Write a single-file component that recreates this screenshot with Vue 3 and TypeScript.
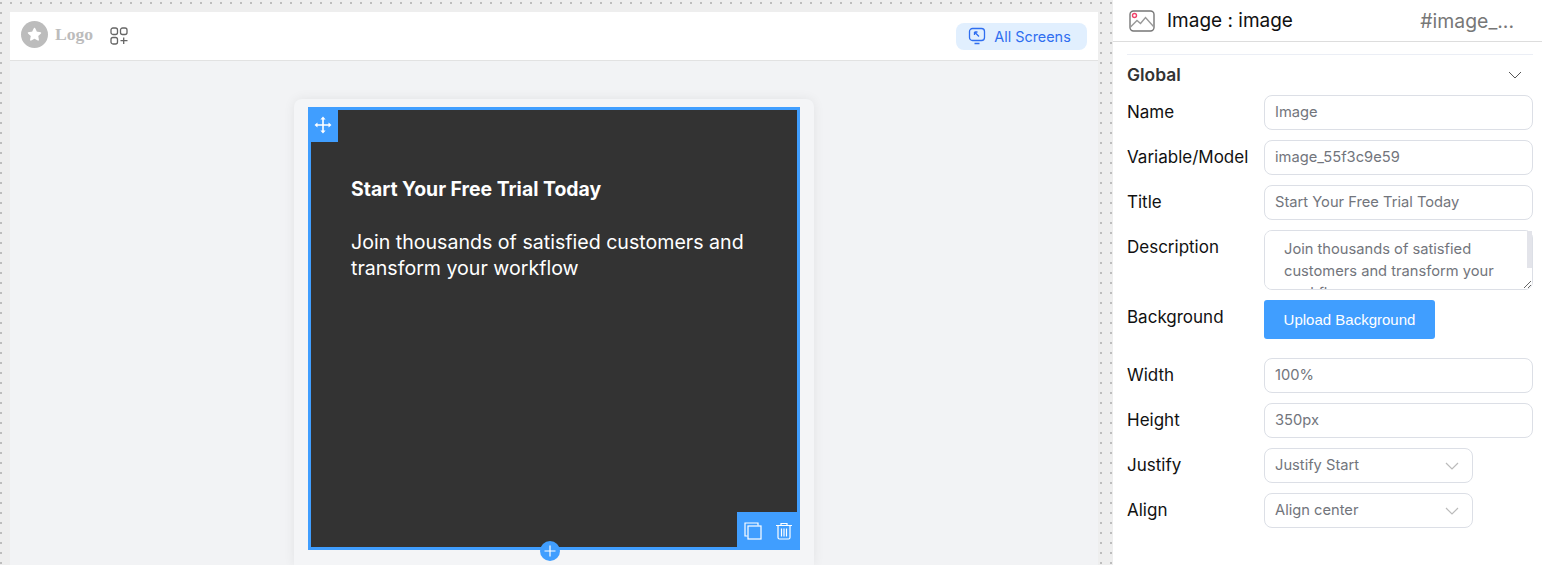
<template>
  <div class="builder">
    <section class="canvas">
      <header class="topbar">
        <div class="logo">
          <span class="logo-badge">
            <svg viewBox="0 0 24 24" width="19" height="19"><path fill="#fff" stroke="#fff" stroke-width="2" stroke-linejoin="round" d="M12 4.500l2.300 4.800 5.200.7-3.800 3.600.9 5.200L12 16.300l-4.600 2.500.9-5.200L4.500 10l5.200-.7z" /></svg>
          </span>
          <span class="logo-text">Logo</span>
        </div>
        <svg class="add-block" viewBox="0 0 18 18" width="18" height="18" fill="none" stroke="#666" stroke-width="1.300">
          <rect x="1" y="1" width="6.500" height="6.500" rx="2" />
          <rect x="10.500" y="1" width="6.500" height="6.500" rx="2" />
          <rect x="1" y="10.500" width="6.500" height="6.500" rx="2" />
          <path d="M13.700 10.500v6.500M10.500 13.700h7" />
        </svg>
        <button class="screens-btn">
          <svg viewBox="0 0 18 18" width="18" height="18" fill="none" stroke="#2f6ef0" stroke-width="1.300">
            <rect x="1.500" y="1.500" width="15" height="12" rx="3" />
            <path d="M6.500 16.500h5M6.500 5l4.500 4.500M6.500 5v3M6.500 5h3" />
          </svg>
          All Screens
        </button>
      </header>

      <div class="stage">
        <div class="page">
          <div class="hero">
            <span class="move-handle">
              <svg viewBox="0 0 18 18" width="18" height="18" fill="none" stroke="#fff" stroke-width="1.600">
                <path d="M9 2v14M2 9h14" />
                <path fill="#fff" stroke="none" d="M9 .5l2.600 3H6.400zM9 17.500l2.600-3H6.400zM.5 9l3-2.600v5.200zM17.500 9l-3-2.600v5.200z" />
              </svg>
            </span>
            <div class="hero-copy">
              <h2>Start Your Free Trial Today</h2>
              <p>Join thousands of satisfied customers and transform your workflow</p>
            </div>
            <div class="hero-tools">
              <svg viewBox="0 0 18 18" width="18" height="18" fill="none" stroke="#fff" stroke-width="1.200">
                <path d="M3.500 14H1V1h13v2.500" />
                <rect x="4" y="4" width="13" height="13" />
              </svg>
              <svg viewBox="0 0 18 18" width="18" height="18" fill="none" stroke="#fff" stroke-width="1.200">
                <path d="M1 3.500h16M6 3.500V1.500h6v2M3 3.500V15.500a1.500 1.500 0 0 0 1.500 1.500h9a1.500 1.500 0 0 0 1.500-1.500V3.500M6.500 6.500v8M9 6.500v8M11.500 6.500v8" />
              </svg>
            </div>
            <span class="add-below">
              <svg viewBox="0 0 12 12" width="12" height="12" stroke="#fff" stroke-width="1.200"><path d="M6 .5v11M.5 6h11" /></svg>
            </span>
          </div>
        </div>
      </div>
    </section>

    <aside class="panel">
      <div class="panel-head">
        <svg viewBox="0 0 26 22" width="26" height="22" fill="none" stroke="#777" stroke-width="1.400">
          <rect x="1" y="1" width="24" height="20" rx="3.500" />
          <path stroke="#999" d="M1.500 17l6.500-6.500 3.500 3 5-6 8 9" />
          <circle cx="5.500" cy="5.500" r="2" stroke="#f0436a" />
        </svg>
        <span class="panel-title">Image : image</span>
        <span class="panel-id">#image_...</span>
      </div>

      <div class="panel-body">
        <div class="section-head">
          <span>Global</span>
          <svg viewBox="0 0 14 8" width="14" height="8" fill="none" stroke="#555" stroke-width="1"><path d="M1 1l6 6 6-6" /></svg>
        </div>

        <div class="fields">
          <label v-for="field in topFields" :key="field.label" class="field">
            <span class="field-label">{{ field.label }}</span>
            <input class="control" :value="field.value" />
          </label>

          <label class="field">
            <span class="field-label">Description</span>
            <span class="area-wrap">
              <textarea class="control area" :value="description"></textarea>
              <span class="area-thumb"></span>
            </span>
          </label>

          <div class="field upload-row">
            <span class="field-label">Background</span>
            <button class="upload-btn">Upload Background</button>
          </div>

          <label v-for="field in sizeFields" :key="field.label" class="field">
            <span class="field-label">{{ field.label }}</span>
            <input class="control" :value="field.value" />
          </label>

          <label v-for="field in selectFields" :key="field.label" class="field">
            <span class="field-label">{{ field.label }}</span>
            <span class="select-wrap">
              <select class="control select">
                <option>{{ field.value }}</option>
              </select>
              <svg viewBox="0 0 14 8" width="14" height="8" fill="none" stroke="#bbb" stroke-width="1.200"><path d="M1 1l6 6 6-6" /></svg>
            </span>
          </label>
        </div>
      </div>
    </aside>
  </div>
</template>

<script setup lang="ts">
interface Field {
  label: string
  value: string
}

const topFields: Field[] = [
  { label: 'Name', value: 'Image' },
  { label: 'Variable/Model', value: 'image_55f3c9e59' },
  { label: 'Title', value: 'Start Your Free Trial Today' }
]

const description = 'Join thousands of satisfied customers and transform your workflow'

const sizeFields: Field[] = [
  { label: 'Width', value: '100%' },
  { label: 'Height', value: '350px' }
]

const selectFields: Field[] = [
  { label: 'Justify', value: 'Justify Start' },
  { label: 'Align', value: 'Align center' }
]
</script>

<style>
html,
body {
  margin: 0;
  overflow: hidden;
}
</style>

<style scoped>
.builder {
  display: flex;
  width: 1542px;
  height: 565px;
  overflow: hidden;
  font-family: Inter, "Liberation Sans", sans-serif;
  background-color: #eeeeee;
  background-image: radial-gradient(circle at 1px 3px, #bdbdbd 1px, transparent 1.300px);
  background-size: 10px 10px;
}

.canvas {
  width: 1088px;
  margin: 12px 15px 0 10px;
  display: flex;
  flex-direction: column;
  background: #f2f3f5;
}

.topbar {
  height: 48px;
  flex: none;
  display: flex;
  align-items: center;
  padding: 0 11px;
  background: #fff;
  border-bottom: 1px solid #e2e2e2;
}

.logo {
  display: flex;
  align-items: center;
  gap: 7px;
  margin-top: -3px;
}

.logo-badge {
  width: 27px;
  height: 27px;
  border-radius: 50%;
  background: #bcbcbc;
  display: flex;
  align-items: center;
  justify-content: center;
}

.logo-text {
  font-family: "Liberation Serif", serif;
  font-weight: 700;
  font-size: 17.6px;
  color: #bcbcbc;
}

.add-block {
  margin-left: 17px;
}

.screens-btn {
  margin-left: auto;
  width: 131px;
  height: 27px;
  display: flex;
  align-items: center;
  justify-content: center;
  gap: 8px;
  padding: 0 4px 0 0;
  border: 0;
  border-radius: 8px;
  background: #e1effe;
  color: #2f6ef0;
  font: 14.4px Inter, sans-serif;
}

.stage {
  flex: 1;
  display: flex;
  justify-content: center;
  padding-top: 38px;
  min-height: 0;
}

.page {
  width: 492px;
  padding: 8px 14px 0;
  background: #f4f5f7;
  border-radius: 8px 8px 0 0;
  box-shadow: 0 0 12px rgba(0, 0, 0, 0.07);
}

.hero {
  position: relative;
  box-sizing: border-box;
  height: 443px;
  border: 3px solid #409eff;
  background: #333;
  color: #fff;
}

.move-handle {
  position: absolute;
  left: -3px;
  top: -3px;
  width: 30px;
  height: 35px;
  background: #409eff;
  display: flex;
  align-items: center;
  justify-content: center;
}

.hero-copy {
  padding: 67px 40px 0 40px;
}

.hero-copy h2 {
  margin: 0;
  font-size: 19.4px;
  font-weight: 700;
  line-height: 24px;
}

.hero-copy p {
  margin: 28px 0 0;
  font-size: 19.6px;
  line-height: 26px;
}

.hero-tools {
  position: absolute;
  right: -3px;
  bottom: -3px;
  width: 63px;
  height: 38px;
  display: flex;
  align-items: center;
  justify-content: center;
  gap: 13px;
  background: #409eff;
}

.add-below {
  position: absolute;
  left: 229px;
  bottom: -14px;
  width: 20px;
  height: 20px;
  border-radius: 50%;
  background: #409eff;
  display: flex;
  align-items: center;
  justify-content: center;
}

.panel {
  flex: 1;
  background: #fff;
}

.panel-head {
  height: 41px;
  display: flex;
  align-items: center;
  padding: 0 28px 0 16px;
  border-bottom: 1px solid #ddd;
}

.panel-title {
  margin-left: 12px;
  font-size: 19px;
  color: #111;
}

.panel-id {
  margin-left: auto;
  font-size: 19.4px;
  color: #777;
}

.panel-body {
  margin: 12px 9px 0 14px;
  border-top: 1px solid #ebeef5;
}

.section-head {
  height: 39px;
  display: flex;
  align-items: center;
  justify-content: space-between;
  padding-right: 11px;
  font-size: 17.4px;
  font-weight: 600;
  color: #333;
}

.fields {
  display: flex;
  flex-direction: column;
  gap: 10px;
  margin-top: 1px;
}

.field {
  display: flex;
  align-items: flex-start;
}

.field-label {
  width: 137px;
  flex: none;
  font-size: 17px;
  line-height: 35px;
  color: #111;
}

.control {
  box-sizing: border-box;
  width: 269px;
  height: 35px;
  padding: 0 10px 2px;
  border: 1px solid #dcdfe6;
  border-radius: 8px;
  outline: none;
  background: #fff;
  font: 14.7px/20px Inter, sans-serif;
  color: #72757c;
}

.area-wrap {
  position: relative;
  display: block;
}

.area {
  display: block;
  height: 60px;
  padding: 7px 19px;
  line-height: 22px;
}

.area-thumb {
  position: absolute;
  top: 1px;
  right: 1px;
  width: 5px;
  height: 37px;
  background: #e3e4ea;
}

.upload-row {
  margin-bottom: 9px;
}

.upload-btn {
  width: 171px;
  height: 39px;
  border: 0;
  border-radius: 3px;
  background: #409eff;
  color: #fff;
  font: 15px "Liberation Sans", sans-serif;
}

.select-wrap {
  position: relative;
  display: block;
}

.select {
  display: block;
  width: 209px;
  appearance: none;
}

.select-wrap svg {
  position: absolute;
  right: 14px;
  top: 14px;
}
</style>
